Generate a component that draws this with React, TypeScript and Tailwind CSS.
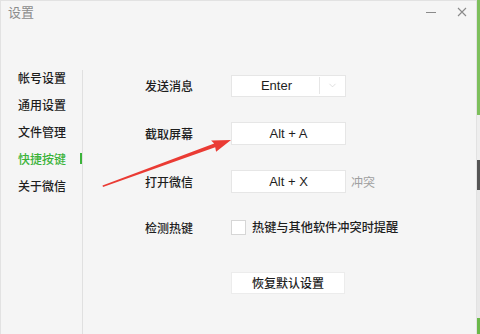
import { ChevronDown } from "lucide-react";

const NAV = ["帐号设置", "通用设置", "文件管理", "快捷按键", "关于微信"];
const ACTIVE = "快捷按键";

const font = { fontFamily: '"Noto Sans CJK SC", "Noto Sans", sans-serif' };
const latin = { fontFamily: '"Liberation Sans", Arial, sans-serif' };

function Arrow() {
  // tail (103,186) -> tip (230,140)
  return (
    <svg
      className="absolute left-0 top-0 pointer-events-none"
      width="480"
      height="334"
      viewBox="0 0 480 334"
    >
      <polygon
        points="103,187 102.5,185.6 214.2,143.6 211.1,140.4 231,140 216.1,151.7 215.2,147.3"
        fill="#ea3b34"
      />
    </svg>
  );
}

export default function App() {
  return (
    <div className="relative flex w-[480px] h-[334px] bg-[#f5f5f5] overflow-hidden" style={font}>
      <div className="flex flex-col w-[477px] h-full border-l border-t border-r border-[#e2e2e2]">
        {/* title bar */}
        <div className="flex items-start h-[29px] pl-[7px] pr-[9px]">
          <span className="mt-[3px] text-[13px] leading-[16px] text-[#8c8c8c]">设置</span>
          <div className="ml-auto flex items-center gap-[21px] mt-[6px]">
            <span className="block w-[10px] h-px bg-[#8a8a8a] mt-[1px]" />
            <svg width="10" height="10" viewBox="0 0 10 10">
              <path d="M1 1 L9 9 M9 1 L1 9" stroke="#8a8a8a" strokeWidth="1.1" />
            </svg>
          </div>
        </div>

        <div className="flex flex-1">
          {/* nav */}
          <div className="w-[81px] pl-[17px] pt-[35px]">
            {NAV.map((n) => (
              <div
                key={n}
                className={`flex items-center justify-between h-[26.8px] text-[12px] font-medium ${
                  n === ACTIVE ? "text-[#3bb33a]" : "text-[#1e1e1e]"
                }`}
              >
                <span>{n}</span>
                {n === ACTIVE && <span className="block w-[2px] h-[11px] bg-[#3bb33a]" />}
              </div>
            ))}
          </div>
          <div className="w-px mt-[40px] bg-[#e0e0e0]" />

          {/* content */}
          <div className="flex flex-col pl-[62px] text-[12px] text-[#1e1e1e]">
            <div className="flex items-center h-[23px] mt-[44px]">
              <span className="w-[86px] font-medium">发送消息</span>
              <div className="flex items-center w-[115px] h-[22px] bg-white border border-[#e6e6e6]">
                <span className="flex-1 text-center text-[13px] pl-[2px]" style={latin}>
                  Enter
                </span>
                <span className="w-px h-[17px] bg-[#e6e6e6]" />
                <span className="w-[25px] flex justify-center">
                  <ChevronDown size={11} strokeWidth={1.2} color="#c4c4c4" />
                </span>
              </div>
            </div>

            <div className="flex items-center h-[23px] mt-[25px]">
              <span className="w-[86px] font-medium">截取屏幕</span>
              <div className="flex items-center justify-center w-[115px] h-[23px] bg-white border border-[#e6e6e6] text-[13px]" style={latin}>
                Alt + A
              </div>
            </div>

            <div className="flex items-center h-[23px] mt-[25px]">
              <span className="w-[86px] font-medium">打开微信</span>
              <div className="flex items-center justify-center w-[115px] h-[23px] bg-white border border-[#e6e6e6] text-[13px]" style={latin}>
                Alt + X
              </div>
              <span className="ml-[5px] text-[12px] text-[#a0a0a0]">冲突</span>
            </div>

            <div className="flex items-center h-[23px] mt-[23px]">
              <span className="w-[86px] font-medium">检测热键</span>
              <span className="w-[15px] h-[15px] bg-white border border-[#d6d6d6]" />
              <span className="ml-[6px] text-[12.2px] font-medium">热键与其他软件冲突时提醒</span>
            </div>

            <div className="flex items-center h-[23px] mt-[32px]">
              <span className="w-[86px]" />
              <div className="flex items-center justify-center w-[114px] h-[22px] bg-white border border-[#ececec] text-[12px] font-medium">
                恢复默认设置
              </div>
            </div>
          </div>
        </div>
      </div>

      {/* edge of the window behind */}
      <div className="flex flex-col w-[3px] h-full">
        <div className="h-[115px] bg-[#7dbf5c]" />
        <div className="h-[45px] bg-[#eeeeee]" />
        <div className="h-[30px] bg-[#555]" />
        <div className="h-[128px] bg-[#e8e8e8]" />
        <div className="flex-1 bg-[#6bb84a]" />
      </div>

      <Arrow />
    </div>
  );
}
